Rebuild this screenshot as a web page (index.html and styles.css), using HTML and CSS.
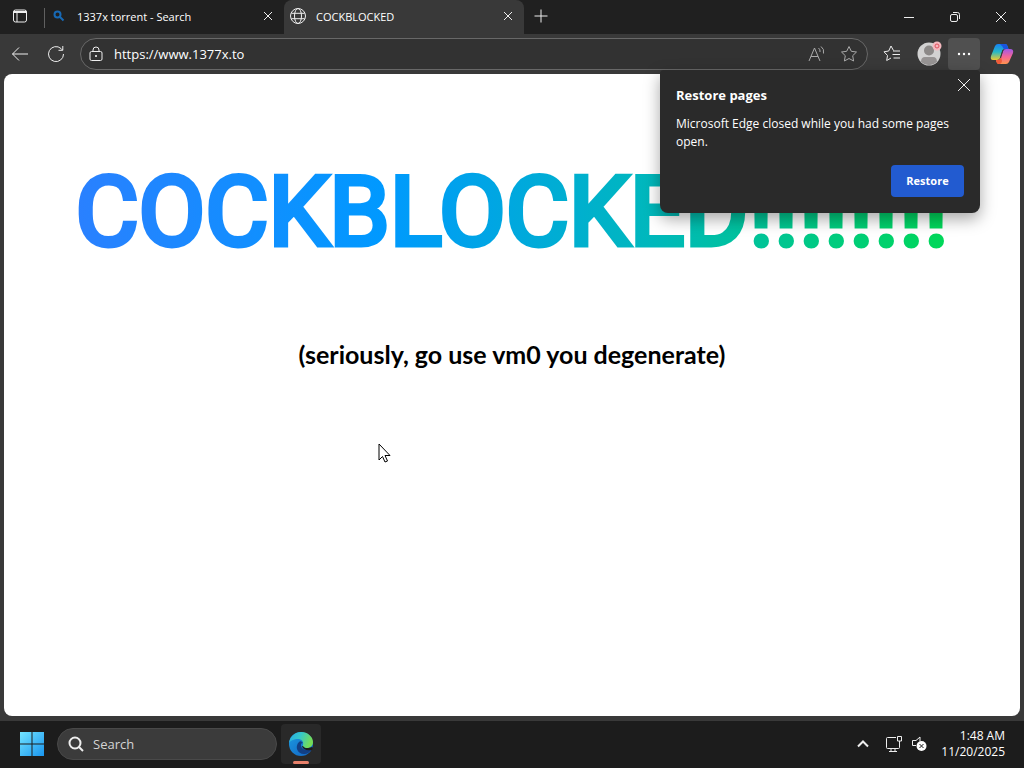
FILE: index.html
```html
<!DOCTYPE html>
<html lang="en">

<head>
    <meta charset="UTF-8">
    <meta name="viewport" content="width=device-width, initial-scale=1.0">
    <title>COCKBLOCKED</title>
    <link rel="stylesheet" href="styles.css">
</head>

<body>
    <div class="browser">
        <header class="tabbar">
            <button class="tab-actions" aria-label="Tab actions">
                <svg width="16" height="16" viewBox="0 0 16 16"><rect x="1.5" y="2" width="13" height="12" rx="2" /><path d="M1.5 4.5h13M1.5 3.5h13M5 4.500v9.500" /></svg>
            </button>
            <div class="tab">
                <svg class="tab-icon search-blue" width="16" height="16" viewBox="0 0 16 16"><circle cx="6.500" cy="6.500" r="3" /><path d="M9 9l3.500 3.500" /></svg>
                <span class="tab-title">1337x torrent - Search</span>
                <button class="tab-close" aria-label="Close tab">
                    <svg width="10" height="10" viewBox="0 0 10 10"><path d="M1 1l8 8M9 1l-8 8" /></svg>
                </button>
            </div>
            <div class="tab active">
                <svg class="tab-icon" width="18" height="18" viewBox="0 0 18 18"><circle cx="9" cy="9" r="7.500" /><ellipse cx="9" cy="9" rx="3.500" ry="7.500" /><path d="M2.300 6.300h13.400M2.300 11.700h13.400" /></svg>
                <span class="tab-title">COCKBLOCKED</span>
                <button class="tab-close" aria-label="Close tab">
                    <svg width="10" height="10" viewBox="0 0 10 10"><path d="M1 1l8 8M9 1l-8 8" /></svg>
                </button>
            </div>
            <button class="new-tab" aria-label="New tab">
                <svg width="14" height="14" viewBox="0 0 14 14"><path d="M7 .5v13M.5 7h13" /></svg>
            </button>
            <div class="window-controls">
                <button aria-label="Minimize"><svg width="12" height="12" viewBox="0 0 12 12"><path d="M1 6.500h10" /></svg></button>
                <button aria-label="Restore down"><svg width="12" height="12" viewBox="0 0 12 12"><rect x="1.500" y="3.500" width="7" height="7" rx="1.500" /><path d="M4 1.500h4.500q2 0 2 2V8" /></svg></button>
                <button aria-label="Close"><svg width="12" height="12" viewBox="0 0 12 12"><path d="M1 1l10 10M11 1L1 11" /></svg></button>
            </div>
        </header>

        <div class="toolbar">
            <button class="nav" aria-label="Back">
                <svg width="18" height="16" viewBox="0 0 18 16"><path d="M8 1.500L1.500 8 8 14.500M1.500 8H17" /></svg>
            </button>
            <button class="nav" aria-label="Refresh">
                <svg width="18" height="18" viewBox="0 0 18 18"><path d="M16.500 9A7.500 7.500 0 1 1 14 3.500L15.500 5M15.800 1v4.300h-4.300" /></svg>
            </button>
            <div class="address">
                <svg width="14" height="16" viewBox="0 0 14 16"><rect x="1" y="5.500" width="12" height="9" rx="1.500" /><path d="M4 5.500V4a3 3 0 0 1 6 0v1.500" /><circle class="solid" cx="7" cy="10" r="1" /></svg>
                <input type="text" value="https://www.1377x.to" aria-label="Address">
                <button class="dim" aria-label="Read aloud">
                    <svg width="18" height="16" viewBox="0 0 18 16"><path d="M1 15L6.500 2 12 15M3 10.500h7M10.500 2q2 1.500 1.500 4M13 .5q3.500 2.500 2.500 7" /></svg>
                </button>
                <button class="dim" aria-label="Add to favorites">
                    <svg width="18" height="18" viewBox="0 0 18 18"><path d="M9 1.500l2.300 4.800 5.200.7-3.800 3.700.9 5.300L9 13.500 4.400 16l.9-5.300L1.500 7l5.200-.7z" /></svg>
                </button>
            </div>
            <button class="favorites" aria-label="Favorites">
                <svg width="18" height="18" viewBox="0 0 18 18"><path d="M10.500 5.500L8 1 5.700 6 1 6.800l3.500 3.700-.8 5L8 13M10 6h7M9.500 9.500H17M10.500 13H17" /></svg>
            </button>
            <button class="profile" aria-label="Profile">
                <svg width="26" height="26" viewBox="0 0 26 26">
                    <circle cx="12" cy="13" r="11.500" fill="#d2d2d2" />
                    <circle cx="12" cy="9.500" r="5" fill="#8c8988" />
                    <path d="M4 21q0-5 4-5h8q4 0 4 5-8 6.500-16 0z" fill="#979494" />
                    <circle cx="20" cy="5" r="4.500" fill="#f5b9bf" />
                    <circle cx="20" cy="5" r="2" fill="none" stroke="#e0525f" />
                </svg>
            </button>
            <button class="more" aria-label="Settings and more">
                <svg width="16" height="4" viewBox="0 0 16 4"><circle class="solid" cx="3" cy="2" r="1.200" /><circle class="solid" cx="8" cy="2" r="1.200" /><circle class="solid" cx="13" cy="2" r="1.200" /></svg>
            </button>
            <button class="copilot" aria-label="Copilot">
                <svg width="24" height="24" viewBox="0 0 24 24">
                    <defs>
                        <linearGradient id="cool" x1="0" y1="0" x2="0" y2="1"><stop offset="0" stop-color="#1681f5" /><stop offset=".5" stop-color="#28b9c5" /><stop offset="1" stop-color="#f0c92f" /></linearGradient>
                        <linearGradient id="warm" x1="0" y1="0" x2="0" y2="1"><stop offset="0" stop-color="#a259e6" /><stop offset=".5" stop-color="#f46599" /><stop offset="1" stop-color="#ff944d" /></linearGradient>
                    </defs>
                    <path d="M5 4q1-2 3-2h7q2 0 2.500 2l1 3h-4q-2 0-2.500 2l-2 7q-1 2-3 2H3q-3 0-2-4z" fill="url(#cool)" />
                    <path d="M19 20q-1 2-3 2H9q-2 0-2.500-2L6 18h2q2 0 2.500-2l2.500-7q1-2 3-2h4q4 0 3 4z" fill="url(#warm)" />
                    <path d="M10 2h5q2 0 2.500 2l1 3h-4q-1.500 0-2-2.500z" fill="#1a55df" />
                    <path d="M6 18h2q2 0 2.500-2l.5-1 1 4q0 2-2 3H9q-2 0-2.500-2z" fill="#f05b38" />
                    <path d="M13 8l-2.500 8" stroke="#393939" />
                </svg>
            </button>

            <section class="popup">
                <button class="popup-close" aria-label="Dismiss"><svg width="14" height="14" viewBox="0 0 14 14"><path d="M1 1l12 12M13 1L1 13" /></svg></button>
                <h2>Restore pages</h2>
                <p>Microsoft Edge closed while you had some pages open.</p>
                <button class="restore">Restore</button>
            </section>
        </div>

        <main class="page">
            <h1>COCKBLOCKED!!!!!!!!</h1>
            <p class="note">(seriously, go use vm0 you degenerate)</p>
            <svg class="cursor" width="13" height="20" viewBox="0 0 13 20"><path d="M1 1v16l3.500-3.500L7 19l2.500-1-2.500-5.500h5z" /></svg>
        </main>
    </div>

    <footer class="taskbar">
        <button class="start" aria-label="Start">
            <svg width="24" height="24" viewBox="0 0 24 24">
                <defs>
                    <linearGradient id="win" x1="0" y1="0" x2="24" y2="24" gradientUnits="userSpaceOnUse"><stop offset="0" stop-color="#72e4ff" /><stop offset="1" stop-color="#1995ef" /></linearGradient>
                </defs>
                <path d="M0 0h11.500v11.500H0zM12.500 0H24v11.500H12.500zM0 12.500h11.500V24H0zM12.500 12.500H24V24H12.500z" fill="url(#win)" />
            </svg>
        </button>
        <label class="search">
            <svg width="16" height="16" viewBox="0 0 16 16"><circle cx="7" cy="7" r="5.500" /><path d="M11 11l4 4" /></svg>
            <input type="text" placeholder="Search">
        </label>
        <button class="task" aria-label="Microsoft Edge">
            <svg width="26" height="26" viewBox="0 0 26 26">
                <defs>
                    <linearGradient id="edge-top" x1="0" y1="0" x2="1" y2=".3"><stop offset="0" stop-color="#25a8e8" /><stop offset=".5" stop-color="#35c8c9" /><stop offset="1" stop-color="#75dc56" /></linearGradient>
                    <linearGradient id="edge-side" x1="0" y1="0" x2="1" y2="1"><stop offset="0" stop-color="#1b9be2" /><stop offset="1" stop-color="#1261c0" /></linearGradient>
                </defs>
                <circle cx="13" cy="13" r="12" fill="url(#edge-side)" />
                <path d="M1 12C2 5 7 1 13 1c7 0 12 5 12 10 0 4-3 6-6 6-4 0-5-1-4-3 1-4-2-6-5-6-4 0-8 2-9 4z" fill="url(#edge-top)" />
                <path d="M11 11c-5 5-1 13 6 12 3-.5 5-2 7-5-5 2-10 1-11-3-.4-2 .5-3 2-3q-2-3-4-1z" fill="#123f84" />
                <path d="M15 15c1 2 4 3 9 1l1 1-1 2c-5 1-9 0-10-4z" fill="#1c1c1c" />
            </svg>
        </button>
        <div class="tray">
            <button aria-label="Show hidden icons"><svg width="12" height="8" viewBox="0 0 12 8"><path class="thick" d="M1 6.500l5-5 5 5" /></svg></button>
            <button class="network" aria-label="Network"><svg width="18" height="18" viewBox="0 0 18 18"><path d="M11 2.500H2.500q-1 0-1 1v9q0 1 1 1h11q1 0 1-1V8M6 14v2.500M10 14v2.500M4 16.500h8M12.500 1.500h4v4.500h-4zM14.500 6v3" /></svg></button>
            <button class="volume" aria-label="Volume"><svg width="16" height="16" viewBox="0 0 16 16"><path d="M9 5V1L5 4.500H1.500v5H5" /><circle class="solid" cx="10.500" cy="10" r="5" /><path class="cross" d="M8.500 8l4 4M12.500 8l-4 4" /></svg></button>
            <div class="clock"><time>1:48 AM</time><time>11/20/2025</time></div>
        </div>
    </footer>
</body>

</html>
```
FILE: styles.css
```css
* {
    box-sizing: border-box;
}

body {
    margin: 0;
    min-height: 100vh;
    display: flex;
    flex-direction: column;
    background: #1c1c1c;
    color: #fff;
    font-family: "Segoe UI", "Open Sans", sans-serif;
    font-size: 12px;
}

button {
    display: flex;
    align-items: center;
    justify-content: center;
    flex-shrink: 0;
    padding: 0;
    border: 0;
    background: none;
    color: inherit;
    font: inherit;
}

input {
    min-width: 0;
    padding: 0;
    border: 0;
    outline: 0;
    background: none;
    color: inherit;
    font: inherit;
}

svg {
    display: block;
    flex-shrink: 0;
    fill: none;
    stroke: #eee;
}

.profile svg,
.copilot svg,
.start svg,
.task svg {
    stroke: none;
}

svg .solid {
    fill: #fff;
    stroke: none;
}

.browser {
    flex: 1;
    display: flex;
    flex-direction: column;
    background: #393939;
}

/* tabs */
.tabbar {
    display: flex;
    height: 34px;
    background: #202020;
}

.tab-actions {
    width: 44px;
    padding: 0 4px 2px 0;
}

.tab {
    flex: 0 1 240px;
    display: flex;
    align-items: center;
    gap: 9px;
    padding: 0 8px 2px 6px;
    font-size: 11px;
}

.tab:not(.active) {
    position: relative;
}

.tab:not(.active)::before {
    content: "";
    position: absolute;
    left: 0;
    top: 8px;
    width: 1px;
    height: 20px;
    background: #606060;
}

.tab.active {
    padding-left: 5px;
    background: #393939;
    border-radius: 8px 8px 0 0;
}

.tab-icon {
    width: 18px;
}

.search-blue {
    stroke: #1769b5;
    stroke-width: 2;
}

.tab-title {
    flex: 1;
    white-space: nowrap;
}

.tab-close {
    width: 16px;
    height: 16px;
}

.new-tab {
    width: 34px;
    padding-bottom: 2px;
}

.window-controls {
    display: flex;
    margin-left: auto;
}

.window-controls button {
    width: 46px;
}

/* toolbar */
.toolbar {
    position: relative;
    display: flex;
    align-items: center;
    height: 40px;
    padding: 0 4px 0 2px;
}

.nav {
    width: 36px;
    height: 32px;
}

.address {
    flex: 1;
    display: flex;
    align-items: center;
    gap: 14px;
    height: 32px;
    margin-left: 6px;
    padding: 0 9px 0 8px;
    border: 1px solid #686868;
    border-radius: 16px;
    background: #323232;
    font-size: 13px;
}

.address input {
    flex: 1;
    margin-left: -3px;
}

.dim svg {
    stroke: #aaa;
}

.favorites {
    width: 32px;
    margin-left: 8px;
}

.profile {
    width: 40px;
    padding-left: 4px;
}

.more {
    width: 32px;
    height: 32px;
    border-radius: 4px;
    background: #505050;
}

.copilot {
    width: 40px;
    padding-left: 4px;
}

/* restore popup */
.popup {
    position: absolute;
    z-index: 1;
    top: 36px;
    right: 44px;
    width: 320px;
    padding: 16px;
    border-radius: 4px 4px 8px 8px;
    background: #2a2a2a;
    box-shadow: 0 6px 16px rgba(0, 0, 0, 0.35);
    line-height: 18px;
}

.popup h2 {
    margin: 0 0 11px;
    font-size: 13px;
}

.popup p {
    margin: 0 0 14px;
}

.popup-close {
    position: absolute;
    top: 8px;
    right: 9px;
}

.restore {
    width: 73px;
    height: 32px;
    margin-left: auto;
    border-radius: 4px;
    background: #225bd0;
    font-size: 11px;
    font-weight: 700;
}

/* page */
.page {
    position: relative;
    flex: 1;
    margin: 0 4px 5px;
    padding-top: 82px;
    border-radius: 8px;
    background: #fff;
    color: #000;
    text-align: center;
}

.page h1 {
    width: fit-content;
    margin: 0 auto;
    background: linear-gradient(90deg, #2a80ff, #0099ff 35%, #00b8bc 66%, #00d857);
    -webkit-background-clip: text;
    background-clip: text;
    color: transparent;
    font-family: "Comic Sans MS", Roboto, sans-serif;
    font-size: 97px;
    font-weight: 400;
    line-height: 112px;
    white-space: nowrap;
    -webkit-text-stroke: 5px transparent;
}

.note {
    margin: 70px 0 0;
    font-family: "Comic Sans MS", Lato, sans-serif;
    font-size: 25px;
    font-weight: 700;
    line-height: 32px;
}

.cursor {
    position: absolute;
    left: 374px;
    top: 369px;
    fill: #fff;
    stroke: #000;
}

/* taskbar */
.taskbar {
    display: flex;
    align-items: center;
    height: 47px;
    padding: 0 12px 2px;
}

.start {
    width: 40px;
    height: 40px;
}

.search {
    display: flex;
    align-items: center;
    gap: 9px;
    width: 220px;
    height: 32px;
    margin: 0 4px 0 5px;
    padding: 0 10px;
    border: 1px solid #494949;
    border-radius: 16px;
    background: #3b3b3b;
    font-size: 13px;
}

.search svg {
    stroke-width: 2;
}

.search input {
    flex: 1;
}

.search input::placeholder {
    color: #d4d4d4;
}

.task {
    position: relative;
    width: 40px;
    height: 40px;
    border-radius: 4px;
    background: #292929;
}

.task::after {
    content: "";
    position: absolute;
    bottom: 0;
    width: 16px;
    height: 3px;
    border-radius: 2px;
    background: #e8816b;
}

.tray {
    display: flex;
    align-items: center;
    gap: 8px;
    margin-left: auto;
    padding-right: 7px;
}

.tray .thick {
    stroke-width: 2;
}

.tray .cross {
    stroke: #1c1c1c;
}

.network {
    margin-left: 8px;
}

.clock {
    display: flex;
    flex-direction: column;
    width: 70px;
    line-height: 16px;
    text-align: right;
}
```
